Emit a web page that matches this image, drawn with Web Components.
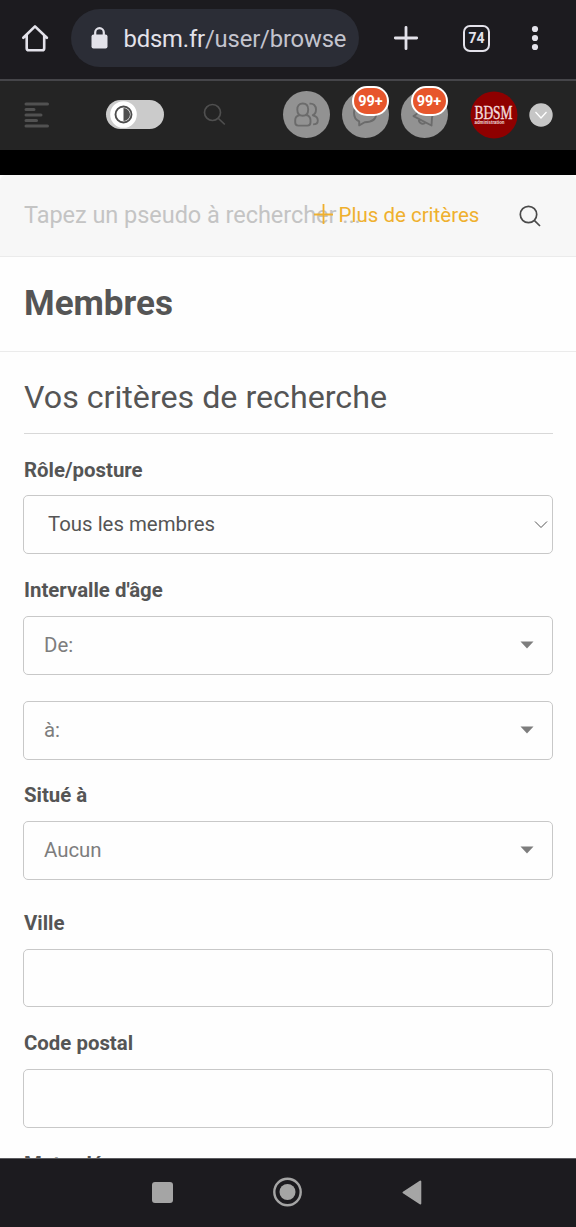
<!DOCTYPE html>
<html lang="fr">
<head>
<meta charset="utf-8">
<title>Membres</title>
<style>
body{margin:0;background:#fefefe;font-family:Roboto,"Liberation Sans",sans-serif;color:#555}
</style>
</head>
<body>
<phone-screen>
  <browser-bar slot="top"><span slot="host">bdsm.fr</span><span slot="path">/user/browse</span><span slot="tabs">74</span></browser-bar>
  <site-bar slot="top">
    <round-button icon="people"></round-button>
    <round-button icon="chat" style="margin-left:12px"><notice-badge>99+</notice-badge></round-button>
    <round-button icon="horn" style="margin-left:11.5px"><notice-badge>99+</notice-badge></round-button>
    <user-avatar></user-avatar>
  </site-bar>
  <search-strip slot="top">Tapez un pseudo à rechercher ...<span slot="more">Plus de critères</span></search-strip>
  <page-title>Membres</page-title>
  <criteria-form>
    <span slot="heading">Vos critères de recherche</span>
    <form-field label="Rôle/posture" style="--lead:24px;--label:37px"><select-box kind="native">Tous les membres</select-box></form-field>
    <form-field label="Intervalle d'âge" style="--lead:24px"><select-box>De:</select-box><select-box style="margin-top:26px">à:</select-box></form-field>
    <form-field label="Situé à" style="--lead:23px"><select-box>Aucun</select-box></form-field>
    <form-field label="Ville" style="--lead:31px"><select-box kind="text"></select-box></form-field>
    <form-field label="Code postal" style="--lead:24px"><select-box kind="text" style="height:59px"></select-box></form-field>
    <form-field label="Mots clés" style="--lead:24px"></form-field>
  </criteria-form>
  <system-nav slot="bottom"></system-nav>
</phone-screen>
<script>
const define = (name, build) => customElements.define(name, class extends HTMLElement {
  constructor() {
    super();
    this.attachShadow({mode: 'open'});
  }
  connectedCallback() {
    this.shadowRoot.innerHTML = '<style>*{box-sizing:border-box}svg{display:block;flex:none;overflow:visible}</style>' + build(this);
  }
});

define('phone-screen', () => `
<style>:host{display:flex;flex-direction:column;width:576px;height:1227px;overflow:hidden}
main{flex:1;min-height:0;overflow:hidden}</style>
<slot name="top"></slot><main><slot></slot></main><slot name="bottom"></slot>`);

define('browser-bar', () => `
<style>:host{display:flex;align-items:center;box-sizing:border-box;height:81px;padding:0 32px 3px 21px;background:#1c1b1f;border-bottom:2px solid #454549;color:#e3e2ea}
.url{display:flex;align-items:center;width:288px;height:58px;margin-left:22px;padding:2px 0 0 20px;border-radius:29px;background:#2b2d36;font-size:23.800px;letter-spacing:-.16px;white-space:nowrap}
.url svg{margin:-2px 15.500px 0 0}
.path{color:#c4c4ce}
.plus{margin-left:35px}
.tabs{display:flex;align-items:center;justify-content:center;width:27px;height:27px;margin-left:45px;border:2.600px solid #e3e2ea;border-radius:7px;font-size:14px;font-weight:700}
.dots{margin-left:41px}</style>
<svg width="28" height="28" viewBox="0 0 28 28" fill="none" stroke="#e3e2ea" stroke-width="2.600" stroke-linejoin="round" stroke-linecap="round"><path d="M2.300 13.800 14 2.400 25.900 13.800M5.700 11V24.200Q5.700 26.300 7.800 26.300H21.200Q23.200 26.300 23.200 24.200V11"/></svg>
<div class="url"><svg width="17" height="22" viewBox="0 0 17 22"><rect x=".5" y="7.500" width="16" height="14" rx="2" fill="#e3e2ea"/><path d="M4.200 8V5.500a4.300 4.300 0 0 1 8.600 0V8" fill="none" stroke="#e3e2ea" stroke-width="2.200"/></svg><slot name="host"></slot><span class="path"><slot name="path"></slot></span></div>
<svg class="plus" width="24" height="24" viewBox="0 0 24 24"><path d="M12 1.300V22.700M1.300 12H22.700" stroke="#e3e2ea" stroke-width="2.800" stroke-linecap="round"/></svg>
<div class="tabs"><slot name="tabs"></slot></div>
<svg class="dots" width="8" height="26" viewBox="0 0 8 26" fill="#e3e2ea"><circle cx="4" cy="4" r="3.100"/><circle cx="4" cy="13" r="3.100"/><circle cx="4" cy="22" r="3.100"/></svg>`);

define('site-bar', () => `
<style>:host{display:flex;align-items:center;box-sizing:border-box;height:94px;padding:0 0 27px 24px;background:linear-gradient(#242424 69px,#000 69px)}
.toggle{display:flex;align-items:center;width:58px;height:29px;margin:0 0 0 56px;padding-left:4px;border-radius:15px;background:#cbcbcb}
.find{margin-left:39px;margin-right:57px}</style>
<svg width="26" height="26" viewBox="0 0 26 26" stroke="#515151" stroke-width="3" stroke-linecap="round"><path d="M2 2H23.500M2 7.600H10M2 13H17M2 18.600H12.500M2 24H23.500"/></svg>
<div class="toggle"><svg width="27" height="27" viewBox="0 0 27 27"><circle cx="13.500" cy="13.500" r="13.300" fill="#fff"/><circle cx="13.500" cy="13.500" r="8" fill="#fff" stroke="#4e4e4e" stroke-width="1.900"/><path d="M13.500 7a6.500 6.500 0 0 1 0 13z" fill="#4e4e4e"/></svg></div>
<svg class="find" width="23" height="23" viewBox="0 0 23 23" fill="none" stroke="#4f4f4f" stroke-width="1.700"><circle cx="9.500" cy="9.500" r="8"/><path d="m15.500 15.500 6.300 6"/></svg>
<slot></slot>`);

const glyphs = {
  people: '<path d="M19.700 12.500c3.500 0 5.500 2.300 5.500 6s-2 6.200-5.500 6.200-5.400-2.500-5.400-6.200 2-6 5.400-6zM16.500 24c-2.600.7-4.300 2.600-4.300 5.200v2c0 2.300 1 3.400 3 3.400h9.300c2.100 0 3-1.100 3-3.300v-2.100c0-2.600-1.500-4.500-4.300-5.200M26.500 12.700c4-.6 6.500 2 6.500 5.800 0 3-1.200 4.900-3.200 5.700 3.500.8 5 2.800 5 5.300 0 2.600-1.400 3.900-4.700 3.900"/>',
  chat: '<path d="M23.500 12.500c-8 0-11.500 4-11.500 9.300 0 4.200 2 7.300 5.200 8.600v4l5.500-3.200c7.700 0 11.600-3.500 11.600-9.300s-4-9.400-10.800-9.400z"/>',
  horn: '<path d="m12.500 25.200 18 9.300c-.2-5 .3-9 2-13.500 1.700-5-4-11-9.500-8.300-4.500 2.500-2.500 8.500-10.500 12.500zM18 28.300c-.8 3.800 4.400 6 6.500 3.200"/>'
};
define('round-button', el => `
<style>:host{position:relative;display:block;flex:none;width:47px;height:47px;border-radius:50%;background:#929292}
svg{width:47px;height:47px}
::slotted(notice-badge){position:absolute;left:10px;top:-5px}</style>
<svg viewBox="0 0 47 47" fill="none" stroke="#6b6b6b" stroke-width="1.900" stroke-linejoin="round">${glyphs[el.getAttribute('icon')]}</svg><slot></slot>`);

define('notice-badge', () => `
<style>:host{display:flex;align-items:center;justify-content:center;box-sizing:border-box;width:37px;height:30px;border:2px solid #fff;border-radius:15px;background:#e7562c;color:#fff;font-size:14.500px;font-weight:700}</style><slot></slot>`);

define('user-avatar', () => `
<style>:host{display:flex;align-items:center;margin-left:22.500px}.more{margin-left:11px}</style>
<svg width="48" height="48" viewBox="0 0 48 48"><circle cx="24" cy="24" r="23.500" fill="#8f0000"/><text x="4.500" y="28" textLength="38" lengthAdjust="spacingAndGlyphs" font-family="Liberation Serif, serif" font-size="18.500" fill="#f3dede" stroke="#f3dede" stroke-width=".4">BDSM</text><path d="M15.500 22h6" stroke="#f3dede"/><text x="4.500" y="32.800" textLength="30" lengthAdjust="spacingAndGlyphs" font-family="Liberation Sans, sans-serif" font-weight="700" font-size="4.800" fill="#f3dede">administration</text></svg>
<svg class="more" width="24" height="24" viewBox="0 0 24 24"><circle cx="12" cy="12" r="11.700" fill="#c6c6c6"/><path d="m6.500 9 5.500 6 5.500-6" fill="none" stroke="#fff" stroke-width="1.300"/></svg>`);

define('search-strip', () => `
<style>:host{position:relative;display:flex;align-items:center;box-sizing:border-box;height:82px;padding:0 35px 2px 24px;background:#f7f7f7;border-bottom:1px solid #ebebeb;border-radius:6px 6px 0 0;font-size:23.500px;letter-spacing:-.04px;color:#c4c4c4;white-space:nowrap}
.more{position:absolute;left:313.500px;top:28px;display:flex;align-items:center;gap:6px;height:24px;font-size:20.500px;letter-spacing:0;color:#efb02e}
.find{margin:2px 0 0 auto}</style>
<slot></slot>
<div class="more"><svg width="19" height="20" viewBox="0 0 19 20" style="margin-top:-3px"><path d="M9.500 0V20M0 10.500H19" stroke="#efb02e" stroke-width="1.800"/></svg><slot name="more"></slot></div>
<svg class="find" width="22" height="22" viewBox="0 0 22 22" fill="none" stroke="#4a4a4a" stroke-width="1.700"><circle cx="9.500" cy="9.500" r="8.200"/><path d="m15.300 15.300 5.700 5.700"/></svg>`);

define('page-title', () => `
<style>:host{display:block;box-sizing:border-box;height:95px;padding:26px 24px 0;border-bottom:1px solid #ebebeb}
h1{margin:0;font-size:35px;line-height:42px;font-weight:700}</style><h1><slot></slot></h1>`);

define('criteria-form', () => `
<style>:host{display:block;padding:0 23px}
h2{margin:0 0 0 1px;height:82px;padding-top:25px;border-bottom:1px solid #d8d8d8;font-size:32.200px;line-height:40px;font-weight:400}</style>
<h2><slot name="heading"></slot></h2><slot></slot>`);

define('form-field', el => `
<style>:host{display:block;padding-top:var(--lead)}
label{display:block;height:var(--label,38px);padding-left:1px;font-size:20.400px;line-height:25px;font-weight:700}</style>
<label>${el.getAttribute('label')}</label><slot></slot>`);

define('select-box', el => {
  const kind = el.getAttribute('kind');
  const mark = kind === 'text' ? '' : kind === 'native'
    ? '<svg width="14" height="9" viewBox="0 0 14 9"><path d="m1 1.500 6 6 6-6" fill="none" stroke="#555" stroke-width="1"/></svg>'
    : '<svg width="14" height="8" viewBox="0 0 14 8"><path d="M.500.500h13L7 7.500z" fill="#7d7d7d"/></svg>';
  return `
<style>:host{display:flex;align-items:center;justify-content:space-between;box-sizing:border-box;height:${kind === 'text' ? 58 : 59}px;border:1px solid #c8c8c8;border-radius:5px;font-size:20.400px;
padding:${kind === 'native' ? '0 4px 1px 24px' : '0 18px 2px 20px'};color:${kind === 'native' ? '#555' : '#7d7d7d'}}</style>
<span><slot></slot></span>${mark}`;
});

define('system-nav', () => `
<style>:host{display:flex;align-items:center;box-sizing:border-box;height:69px;padding:0 0 2px 152px;background:#1c1b1f;border-top:1px solid #5c5c60}
.home{margin-left:99px}.back{margin-left:99px}</style>
<svg width="21" height="21" viewBox="0 0 21 21"><rect width="21" height="21" rx="3" fill="#a5a5a5"/></svg>
<svg class="home" width="31" height="30" viewBox="0 0 31 30"><circle cx="15.500" cy="15" r="13.200" fill="none" stroke="#a5a5a5" stroke-width="2.400"/><circle cx="15.500" cy="15" r="8" fill="#a5a5a5"/></svg>
<svg class="back" width="20" height="25" viewBox="0 0 20 25"><path d="M18.300 1.500v22L1.500 12.500z" fill="#a5a5a5" stroke="#a5a5a5" stroke-width="2" stroke-linejoin="round"/></svg>`);
</script>
</body>
</html>
